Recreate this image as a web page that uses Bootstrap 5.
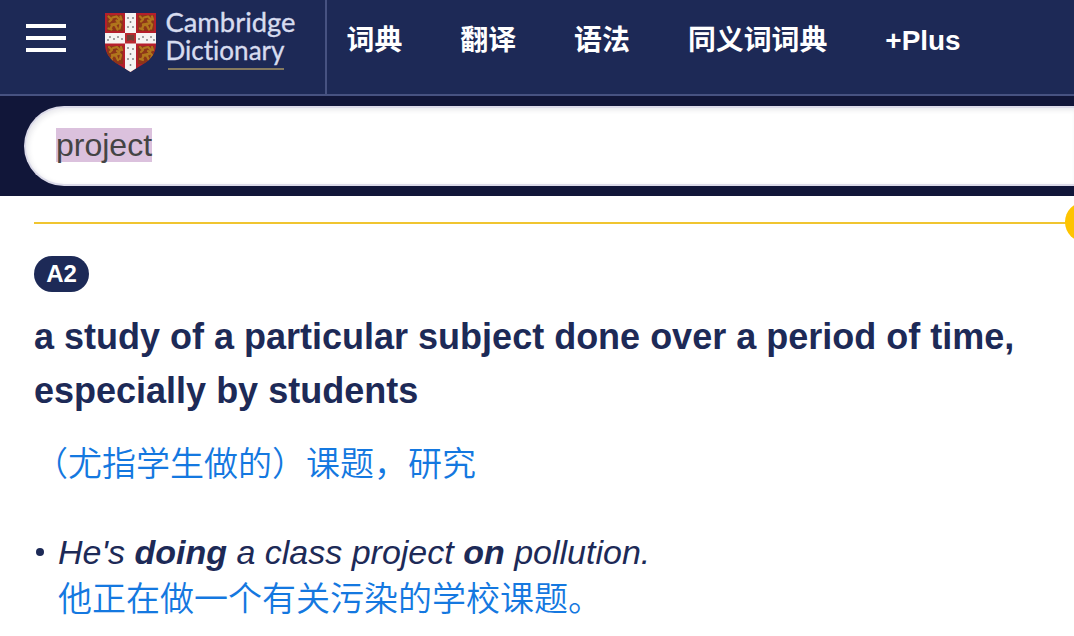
<!DOCTYPE html>
<html lang="zh-CN">
<head>
<meta charset="utf-8">
<meta name="viewport" content="width=device-width, initial-scale=1">
<title>project - Cambridge Dictionary</title>
<link rel="stylesheet" href="https://cdn.jsdelivr.net/npm/bootstrap@5.3.0/dist/css/bootstrap.min.css">
<style>
  body { font-family: "Liberation Sans", "Noto Sans CJK SC", sans-serif; color: #1d2a57; height: 636px; }
  .topbar { height: 96px; background: #1d2956; border-bottom: 2px solid #475281; }
  .brand-area { width: 327px; border-right: 2px solid #475281; padding-left: 26px; }
  .menu-btn { width: 40px; height: 28px; margin-top: 24px; }
  .menu-btn span { height: 4px; background: #fff; }
  .logo { margin: 6px 0 0 34px; }
  .main-links { gap: 58px; padding-left: 19.5px; font-size: 27.9px; line-height: 42px; padding-top: 20px; }
  .main-links a { font-weight: 700; }
  .search-field { height: 80px; border-radius: 40px 0 0 40px; border: 2px solid #dcdbe9; border-right: 0; box-shadow: inset 2px 2px 5px rgba(40,35,70,.10); padding-left: 30px; font-size: 32px; color: #444; }
  .searchbar { height: 100px; background: #111639; padding: 10px 0 10px 24px; }
  .selected { background: #dbc1dd; line-height: 34px; height: 34px; margin-top: -2px; }
  .entry { padding: 26px 0 0 34px; }
  .rule { height: 2px; background: #f0c530; }
  .disc { width: 40px; height: 40px; left: 1031px; top: -20px; background: #fec400; }
  .level { width: 55px; height: 36px; margin-top: 32px; background: #1d2a57; font-size: 24px; line-height: 36px; }
  .definition { font-size: 36px; line-height: 54px; font-weight: 700; margin: 18px 0 0; }
  .trans { font-size: 34px; line-height: 44px; color: #1478e0; font-weight: 350; font-family: "Noto Sans CJK SC", sans-serif; }
  .definition + .trans { margin-top: 22px; }
  .example { font-size: 34px; line-height: 46px; font-style: italic; }
  .sample { margin-top: 45px; }
  .bullet { width: 24px; padding-top: 19px; }
  .bullet i { display: block; width: 8px; height: 8px; margin-left: 2px; background: #1d2a57; border-radius: 50%; }
</style>
</head>
<body class="bg-white overflow-hidden">
<header class="topbar d-flex">
  <div class="brand-area d-flex flex-shrink-0">
    <div class="menu-btn d-flex flex-column justify-content-between" role="button" aria-label="Menu"><span></span><span></span><span></span></div>
    <svg class="logo" width="200" height="72" viewBox="100 6 200 72" role="img" aria-label="Cambridge Dictionary">
      <defs>
        <clipPath id="shield"><path d="M105 13h51v31c0 15-13 20-25.500 28C118 64 105 59 105 44z"/></clipPath>
        <g id="lion" fill="none" stroke="#b0761c" stroke-width="2.300" stroke-linecap="round" stroke-linejoin="round">
          <path d="M2 2l3 3-2 2M6 3l4-1 3 3-2 4-5 1-2 4M10 6l4 4-1 4M5 10l4 1 2 4M2 14l3 1M14 2l1 3"/>
        </g>
      </defs>
      <g clip-path="url(#shield)">
        <path fill="#b51f2b" d="M105 13h51v60h-51z"/>
        <path fill="#8d3518" d="M107 15h16v16h-16zM138 15h16v16h-16zM107 46h16v18h-16zM138 46h16v18h-16z"/>
        <use href="#lion" x="106.500" y="14.500"/><use href="#lion" x="138" y="14.500"/>
        <use href="#lion" x="107" y="45"/><use href="#lion" x="138" y="45"/>
        <path fill="#f5f4f2" d="M125 12h11v61h-11zM105 33h51v10.500h-51z"/>
        <path fill="#b92a31" d="M125 33h11v10.500h-11z"/>
        <path fill="#704136" d="M127 35h7v6l-3-1-4 1z"/>
        <path d="M128 17v2M133 17v2M130.500 21v2M128 26v2M133 26v2M110 36v2M108 39v2M114 38v2M118 36v2M122 38v2M139 38v2M143 36v2M147 39v2M151 36v2M154 39v2M128 47v2M133 48v2M130.500 53v2M128 58v2M133 58v2M130.500 64v2" stroke="#888" stroke-width="1.500"/>
      </g>
      <g fill="#d7dcef" stroke="#d7dcef" stroke-width=".35" font-family="Lato, sans-serif" font-size="26.500" style="font-variant-ligatures:none">
        <text x="165.500" y="32" textLength="130" lengthAdjust="spacingAndGlyphs">Cambridge</text>
        <text x="165.500" y="59.500" textLength="119" lengthAdjust="spacingAndGlyphs">Dictionary</text>
      </g>
      <path fill="#84795f" d="M168 68h116v2H168z"/>
    </svg>
  </div>
  <nav class="main-links d-flex align-items-start text-nowrap">
    <a class="text-white text-decoration-none">词典</a>
    <a class="text-white text-decoration-none">翻译</a>
    <a class="text-white text-decoration-none">语法</a>
    <a class="text-white text-decoration-none">同义词词典</a>
    <a class="text-white text-decoration-none">+Plus</a>
  </nav>
</header>
<div class="searchbar">
  <div class="search-field bg-white d-flex align-items-center"><span class="selected">project</span></div>
</div>
<main class="entry">
  <div class="rule position-relative"><span class="disc position-absolute rounded-circle"></span></div>
  <div class="level rounded-pill text-white text-center fw-bold">A2</div>
  <h1 class="definition">a study of a particular subject done over a period of time,<br>especially by students</h1>
  <div class="trans">（尤指学生做的）课题，研究</div>
  <div class="sample d-flex">
    <div class="bullet flex-shrink-0"><i></i></div>
    <div>
      <div class="example">He's <b>doing</b> a class project <b>on</b> pollution.</div>
      <div class="trans">他正在做一个有关污染的学校课题。</div>
    </div>
  </div>
</main>
<script src="https://cdn.jsdelivr.net/npm/bootstrap@5.3.0/dist/js/bootstrap.bundle.min.js"></script>
</body>
</html>
